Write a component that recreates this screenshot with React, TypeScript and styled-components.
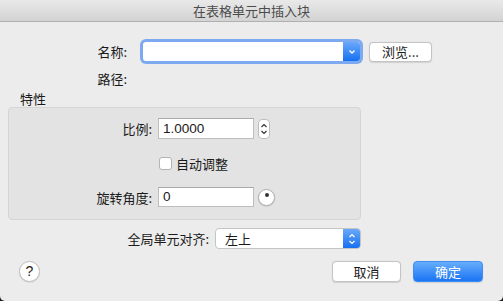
import { FC, ReactElement, ReactNode } from 'react';
import styled, { createGlobalStyle } from 'styled-components';

const GlobalStyle = createGlobalStyle`
    html, body {
        margin: 0;
        padding: 0;
        background: #1c1c1c;
    }
    body {
        font-family: "Noto Sans CJK SC", "Noto Sans", sans-serif;
        font-size: 13px;
        color: #1a1a1a;
    }
`;

const Window = styled.div`
    width: 503px;
    height: 301px;
    background: #ececec;
    border-radius: 0 0 5px 5px;
    overflow: hidden;
    display: flex;
    flex-direction: column;
`;

const TitleBar = styled.div`
    height: 21px;
    line-height: 21px;
    text-align: center;
    color: #4b4b4b;
    background: linear-gradient(#e9e9e9, #d3d3d3);
    border-bottom: 1px solid #b0b0b0;
`;

const Body = styled.div`
    padding: 0 8px;
    display: flex;
    flex-direction: column;
`;

const Row = styled.div<{ $top: number; $height: number }>`
    display: flex;
    align-items: center;
    margin-top: ${p => p.$top}px;
    height: ${p => p.$height}px;
`;

const Label = styled.div<{ $width: number; $gap: number }>`
    width: ${p => p.$width}px;
    margin-right: ${p => p.$gap}px;
    text-align: right;
    white-space: nowrap;
    flex-shrink: 0;
`;

const Combo = styled.div`
    display: flex;
    width: 217px;
    height: 19px;
    border-radius: 3px;
    background: #fff;
    box-shadow: 0 0 0 3px rgba(96, 152, 240, 0.8);
    overflow: hidden;
`;

const ComboField = styled.div`
    flex: 1;
`;

const BlueArrow = styled.div<{ $width: number }>`
    width: ${p => p.$width}px;
    display: flex;
    align-items: center;
    justify-content: center;
    background: linear-gradient(#6aa9fb, #1670f0);
`;

const PushButton = styled.button<{ $width: number; $height?: number; $gap?: number; $primary?: boolean }>`
    width: ${p => p.$width}px;
    height: ${p => p.$height ?? 21}px;
    margin-left: ${p => p.$gap ?? 0}px;
    padding: 0;
    font-family: inherit;
    font-size: 13px;
    line-height: 18px;
    border-radius: 4px;
    color: ${p => (p.$primary ? '#fff' : '#1a1a1a')};
    border: 1px solid ${p => (p.$primary ? '#3f8cf3' : '#c4c4c4')};
    background: ${p => (p.$primary ? 'linear-gradient(#67aefb, #1a74f5)' : '#fff')};
    box-shadow: 0 0.5px 1px rgba(0, 0, 0, 0.12);
`;

const SectionLabel = styled.div`
    height: 18px;
    line-height: 20px;
    padding-left: 12px;
`;

const GroupBox = styled.div`
    box-sizing: border-box;
    width: 353px;
    height: 113px;
    background: #e3e3e3;
    border: 1px solid #d5d5d5;
    border-radius: 4px;
    display: flex;
    flex-direction: column;
`;

const TextField = styled.div<{ $height: number }>`
    box-sizing: border-box;
    width: 96px;
    height: ${p => p.$height}px;
    background: #fff;
    border: 1px solid #bdbdbd;
    border-top-color: #a9a9a9;
    padding-left: 4px;
    line-height: ${p => p.$height - 2}px;
    font-family: "Liberation Sans", Arial, sans-serif;
    font-size: 13.5px;
`;

const Stepper = styled.div`
    margin-left: 4px;
    width: 12px;
    height: 20px;
    box-sizing: border-box;
    background: #fff;
    border: 1px solid #bdbdbd;
    border-radius: 4px;
    display: flex;
    align-items: center;
    justify-content: center;
`;

const CheckRow = styled.label`
    display: flex;
    align-items: center;
    margin-top: 18px;
    height: 13px;
    padding-left: 150px;
`;

const CheckBox = styled.span`
    box-sizing: border-box;
    width: 13px;
    height: 13px;
    background: #fff;
    border: 1px solid #b3b3b3;
    border-radius: 3px;
    margin-right: 4px;
`;

const Dial = styled.div`
    position: relative;
    margin-left: 4px;
    box-sizing: border-box;
    width: 17px;
    height: 17px;
    border-radius: 50%;
    background: #fff;
    border: 1px solid #b0b0b0;
    box-shadow: 0 0.5px 1px rgba(0, 0, 0, 0.2);
`;

const DialDot = styled.span`
    position: absolute;
    left: 6px;
    top: 3px;
    width: 4px;
    height: 4px;
    border-radius: 50%;
    background: #333;
`;

const Popup = styled.div`
    box-sizing: border-box;
    display: flex;
    width: 146px;
    height: 21px;
    background: #fff;
    border: 1px solid #c4c4c4;
    border-radius: 4px;
    overflow: hidden;
`;

const PopupText = styled.div`
    flex: 1;
    padding-left: 9px;
    line-height: 19px;
`;

const Footer = styled.div`
    display: flex;
    align-items: center;
    margin-top: 12px;
    height: 21px;
    padding: 0 12px 0 11px;
`;

const HelpButton = styled.button`
    box-sizing: border-box;
    width: 21px;
    height: 21px;
    padding: 0;
    border-radius: 50%;
    background: #fff;
    border: 1px solid #c0c0c0;
    box-shadow: 0 0.5px 1px rgba(0, 0, 0, 0.15);
    font-family: "Liberation Sans", Arial, sans-serif;
    font-size: 14px;
    line-height: 19px;
    color: #222;
`;

const Spacer = styled.div`
    flex: 1;
`;

const Chevrons: FC<{ up?: boolean; down?: boolean; color: string }> = ({ up, down, color }): ReactElement => (
    <svg width="8" height="14" viewBox="0 0 8 14">
        {up && <path d="M1.5 5 L4 2.5 L6.5 5" fill="none" stroke={color} strokeWidth="1.2" />}
        {down && <path d="M1.5 9 L4 11.5 L6.5 9" fill="none" stroke={color} strokeWidth="1.2" />}
    </svg>
);

const DownChevron = (): ReactElement => (
    <svg width="8" height="6" viewBox="0 0 8 6">
        <path d="M1.5 1.5 L4 4 L6.5 1.5" fill="none" stroke="#fff" strokeWidth="1.3" />
    </svg>
);

const FormRow: FC<{ top: number; height: number; label?: string; labelWidth: number; gap: number; children?: ReactNode }> = (
    { top, height, label, labelWidth, gap, children },
): ReactElement => (
    <Row $top={top} $height={height}>
        <Label $width={labelWidth} $gap={gap}>{label}</Label>
        {children}
    </Row>
);

export default function App(): ReactElement {
    return (
        <>
            <GlobalStyle />
            <Window>
                <TitleBar>在表格单元中插入块</TitleBar>
                <Body>
                    <FormRow top={17} height={25} label="名称:" labelWidth={119} gap={16}>
                        <Combo>
                            <ComboField />
                            <BlueArrow $width={17}><DownChevron /></BlueArrow>
                        </Combo>
                        <PushButton $width={63} $height={20} $gap={9}>浏览...</PushButton>
                    </FormRow>
                    <FormRow top={3} height={22} label="路径:" labelWidth={119} gap={0} />
                    <SectionLabel>特性</SectionLabel>
                    <GroupBox>
                        <FormRow top={10} height={21} label="比例:" labelWidth={143} gap={6}>
                            <TextField $height={21}>1.0000</TextField>
                            <Stepper><Chevrons up down color="#333" /></Stepper>
                        </FormRow>
                        <CheckRow>
                            <CheckBox />
                            自动调整
                        </CheckRow>
                        <FormRow top={17} height={20} label="旋转角度:" labelWidth={143} gap={6}>
                            <TextField $height={20}>0</TextField>
                            <Dial><DialDot /></Dial>
                        </FormRow>
                    </GroupBox>
                    <FormRow top={8} height={21} label="全局单元对齐:" labelWidth={201} gap={6}>
                        <Popup>
                            <PopupText>左上</PopupText>
                            <BlueArrow $width={17}><Chevrons up down color="#fff" /></BlueArrow>
                        </Popup>
                    </FormRow>
                    <Footer>
                        <HelpButton>?</HelpButton>
                        <Spacer />
                        <PushButton $width={69}>取消</PushButton>
                        <PushButton $width={70} $gap={12} $primary>确定</PushButton>
                    </Footer>
                </Body>
            </Window>
        </>
    );
}
